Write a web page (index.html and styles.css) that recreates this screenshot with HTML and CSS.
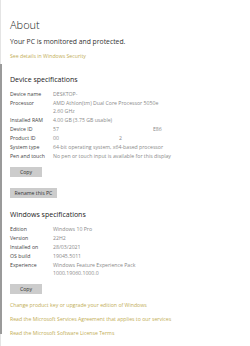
FILE: index.html
```html
<!DOCTYPE html>
<html lang="en">
<head>
    <meta charset="UTF-8">
    <meta name="viewport" content="width=device-width, initial-scale=1.0">
    <title>About</title>
    <link rel="stylesheet" href="styles.css">
</head>
<body>
    <div class="settings">
        <h1>About</h1>
        <p class="status">Your PC is monitored and protected.</p>
        <a class="link first-link" href="#">See details in Windows Security</a>

        <h2>Device specifications</h2>
        <div class="specs">
            <span class="label">Device name</span><span class="value">DESKTOP-</span>
            <span class="label">Processor</span><span class="value">AMD Athlon(tm) Dual Core Processor 5050e<br>2.60 GHz</span>
            <span class="label">Installed RAM</span><span class="value">4.00 GB (3.75 GB usable)</span>
            <span class="label">Device ID</span><span class="value split"><span>57</span><span class="tail">E86</span></span>
            <span class="label">Product ID</span><span class="value split"><span>00</span><span class="tail short">2</span></span>
            <span class="label">System type</span><span class="value">64-bit operating system, x64-based processor</span>
            <span class="label">Pen and touch</span><span class="value">No pen or touch input is available for this display</span>
        </div>
        <button class="btn copy">Copy</button>
        <button class="btn rename">Rename this PC</button>

        <h2 class="win-heading">Windows specifications</h2>
        <div class="specs">
            <span class="label">Edition</span><span class="value">Windows 10 Pro</span>
            <span class="label">Version</span><span class="value">22H2</span>
            <span class="label">Installed on</span><span class="value">28/03/2021</span>
            <span class="label">OS build</span><span class="value">19045.5011</span>
            <span class="label">Experience</span><span class="value">Windows Feature Experience Pack<br>1000.19060.1000.0</span>
        </div>
        <button class="btn copy">Copy</button>

        <div class="links">
            <a class="link" href="#">Change product key or upgrade your edition of Windows</a>
            <a class="link" href="#">Read the Microsoft Services Agreement that applies to our services</a>
            <a class="link" href="#">Read the Microsoft Software License Terms</a>
        </div>
    </div>
</body>
</html>
```

FILE: styles.css
```css
body {
    margin: 0;
    background:
        linear-gradient(#9a9a9a, #9a9a9a) no-repeat 0 64px / 2px 270px,
        linear-gradient(#e4e4e4, #e4e4e4) no-repeat 0 0 / 1px 100%,
        #fff;
    font-family: 'Open Sans', 'Noto Sans', sans-serif;
    color: #333;
    height: 346px;
    overflow: hidden;
}

.settings {
    padding: 18px 0 0 10px;
}

h1 {
    font-size: 11px;
    font-weight: 300;
    line-height: 13px;
    margin: 0;
    color: #222;
}

.status {
    font-size: 6.8px;
    line-height: 9px;
    margin: 6px 0 0;
    color: #333;
}

.link {
    display: block;
    font-size: 5.2px;
    line-height: 7px;
    color: #c2ad55;
    text-decoration: none;
}

.first-link {
    margin-top: 7px;
}

h2 {
    font-size: 7px;
    font-weight: 400;
    line-height: 9px;
    margin: 15px 0 0;
    color: #222;
}

.win-heading {
    margin-top: 12px;
}

.specs {
    display: grid;
    grid-template-columns: 43px 1fr;
    row-gap: 1px;
    margin-top: 6px;
    font-size: 5.2px;
    line-height: 8px;
}

.label {
    color: #444;
}

.value {
    color: #8a8a8a;
}

.split {
    display: flex;
}

.tail {
    margin-left: 94px;
}

.tail.short {
    margin-left: 60px;
}

.btn {
    display: block;
    border: none;
    background-color: #cccccc;
    color: #333;
    font-family: inherit;
    font-size: 5.2px;
    height: 10px;
    padding: 0;
    margin-top: 7px;
}

.copy {
    width: 32px;
}

.rename {
    width: 47px;
    margin-top: 11px;
}

.links {
    margin-top: 8px;
    display: flex;
    flex-direction: column;
    gap: 7px;
}
```
